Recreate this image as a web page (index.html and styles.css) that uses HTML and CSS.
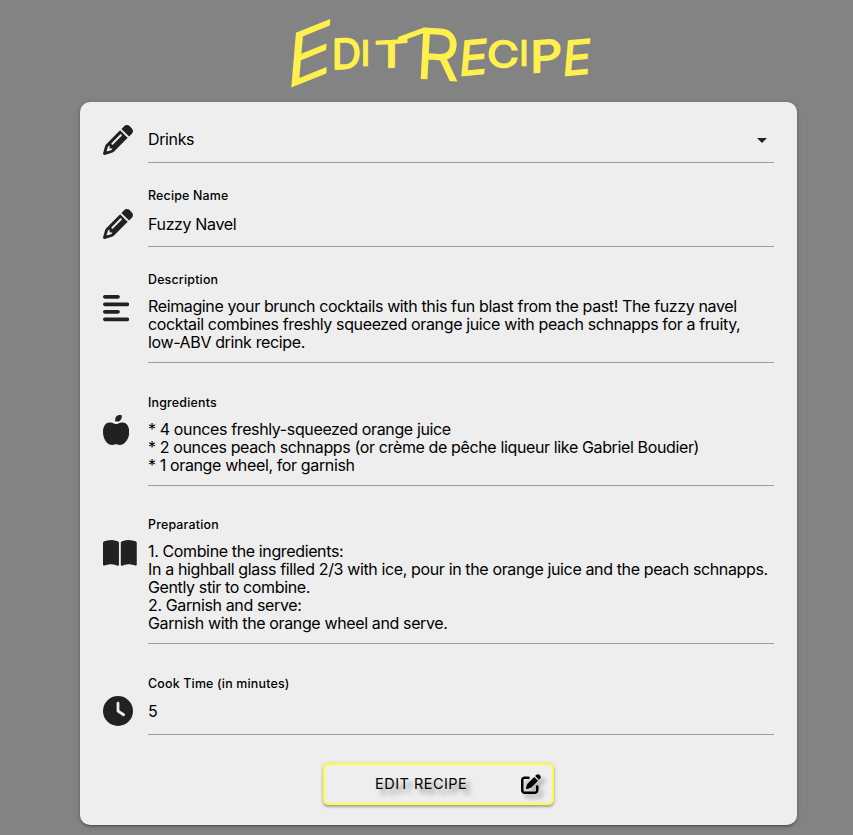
FILE: index.html
```html
<!DOCTYPE html>
<html lang="en">
<head>
<meta charset="utf-8">
<title>Edit Recipe</title>
<link rel="stylesheet" href="styles.css">
</head>
<body>
<svg class="defs" aria-hidden="true">
<symbol id="pencil" viewBox="0 0 512 512"><path d="M410.3 231l11.3-11.3-33.9-33.9-62.1-62.1L291.7 89.8l-11.3 11.3-22.6 22.6L58.6 322.9c-10.4 10.4-18 23.3-22.2 37.4L1 480.7c-2.5 8.4-.2 17.5 6.1 23.7s15.3 8.5 23.7 6.1l120.3-35.4c14.1-4.2 27-11.8 37.4-22.2L387.7 253.7 410.3 231zM160 399.4l-9.1 22.7c-4 3.1-8.5 5.4-13.3 6.9L59.4 452l23-78.1c1.4-4.9 3.8-9.4 6.9-13.3l22.7-9.1v32c0 8.8 7.2 16 16 16h32zM362.7 18.7L348.3 33.2 325.7 55.8 314.3 67.1l33.9 33.9 62.1 62.1 33.9 33.9 11.3-11.3 22.6-22.6 14.5-14.5c25-25 25-65.5 0-90.5L453.3 18.7c-25-25-65.5-25-90.5 0zm-47.4 168l-144 144c-6.2 6.2-16.4 6.2-22.6 0s-6.2-16.4 0-22.6l144-144c6.2-6.2 16.4-6.2 22.6 0s6.2 16.4 0 22.6z"/></symbol>
</svg>
<h1 class="title"><span class="letter e-big">E</span><span class="letter d">d</span><span class="letter i">i</span><span class="letter t">t</span> <span class="letter r">R</span><span class="letter e">e</span><span class="letter c">c</span><span class="letter i2">i</span><span class="letter p">p</span><span class="letter e2">e</span></h1>
<main class="card">
  <div class="field select">
    <svg class="icon"><use href="#pencil"/></svg>
    <div class="control"><div class="value">Drinks</div><svg class="caret" viewBox="0 0 10 5"><path d="M0 0h10L5 5z"/></svg></div>
  </div>
  <div class="field name">
    <svg class="icon"><use href="#pencil"/></svg>
    <div class="control"><div class="label">Recipe Name</div><div class="value">Fuzzy Navel</div></div>
  </div>
  <div class="field desc">
    <svg class="icon narrow" viewBox="0 0 448 512"><path d="M288 64c0 17.7-14.3 32-32 32H32C14.3 96 0 81.7 0 64S14.3 32 32 32H256c17.7 0 32 14.3 32 32zm0 256c0 17.7-14.3 32-32 32H32c-17.7 0-32-14.3-32-32s14.3-32 32-32H256c17.7 0 32 14.3 32 32zM0 192c0-17.7 14.3-32 32-32H416c17.7 0 32 14.3 32 32s-14.3 32-32 32H32c-17.7 0-32-14.3-32-32zM448 448c0 17.7-14.3 32-32 32H32c-17.7 0-32-14.3-32-32s14.3-32 32-32H416c17.7 0 32 14.3 32 32z"/></svg>
    <div class="control"><div class="label">Description</div><div class="value area">Reimagine your brunch cocktails with this fun blast from the past! The fuzzy navel
cocktail combines freshly squeezed orange juice with peach schnapps for a fruity,
low-ABV drink recipe.</div></div>
  </div>
  <div class="field ingr">
    <svg class="icon narrow" viewBox="0 0 448 512"><path d="M224 112c-8.8 0-16-7.2-16-16V80c0-44.2 35.8-80 80-80h16c8.8 0 16 7.2 16 16V32c0 44.2-35.8 80-80 80H224zM0 288c0-76.3 35.7-160 112-160c27.3 0 59.7 10.3 82.7 19.3c18.8 7.3 39.9 7.3 58.7 0c22.9-8.9 55.4-19.3 82.7-19.3c76.3 0 112 83.7 112 160c0 128-80 224-160 224c-16.5 0-38.1-6.6-51.5-11.3c-8.1-2.8-16.9-2.8-25 0c-13.4 4.7-35 11.3-51.5 11.3C80 512 0 416 0 288z"/></svg>
    <div class="control"><div class="label">Ingredients</div><div class="value area">* 4 ounces freshly-squeezed orange juice
* 2 ounces peach schnapps (or crème de pêche liqueur like Gabriel Boudier)
* 1 orange wheel, for garnish</div></div>
  </div>
  <div class="field prep">
    <svg class="icon wide" viewBox="0 0 576 512"><path d="M249.6 471.5c10.8 3.8 22.4-4.1 22.4-15.5V78.6c0-4.2-1.6-8.4-5-11C247.4 52 202.4 32 144 32C93.5 32 46.3 45.3 18.1 56.1C6.8 60.5 0 71.7 0 83.8V454.1c0 11.9 12.8 20.2 24.1 16.5C55.6 460.1 105.5 448 144 448c33.9 0 79 14 105.6 23.5zm76.8 0C353 462 398.1 448 432 448c38.5 0 88.4 12.1 119.9 22.6c11.3 3.8 24.1-4.6 24.1-16.5V83.8c0-12.1-6.8-23.3-18.1-27.6C529.7 45.3 482.5 32 432 32c-58.4 0-103.4 20-123 35.6c-3.3 2.6-5 6.8-5 11V456c0 11.4 11.7 19.3 22.4 15.5z"/></svg>
    <div class="control"><div class="label">Preparation</div><div class="value area">1. Combine the ingredients:
In a highball glass filled 2/3 with ice, pour in the orange juice and the peach schnapps.
Gently stir to combine.
2. Garnish and serve:
Garnish with the orange wheel and serve.</div></div>
  </div>
  <div class="field time">
    <svg class="icon" viewBox="0 0 512 512"><path fill-rule="evenodd" d="M256 0a256 256 0 1 1 0 512A256 256 0 1 1 256 0zM232 120V256c0 8 4 15.5 10.7 20l96 64c11 7.4 25.9 4.4 33.3-6.7s4.4-25.9-6.7-33.3L280 243.2V120c0-13.3-10.7-24-24-24s-24 10.7-24 24z"/></svg>
    <div class="control"><div class="label">Cook Time (in minutes)</div><div class="value">5</div></div>
  </div>
  <button class="submit" type="button"><span class="submit-text">EDIT RECIPE</span><svg class="submit-icon" viewBox="0 0 512 512"><path d="M471.6 21.7c-21.9-21.9-57.3-21.9-79.2 0L362.3 51.7l97.9 97.9 30.1-30.1c21.9-21.9 21.9-57.3 0-79.2L471.6 21.7zm-299.2 220c-6.1 6.1-10.8 13.6-13.5 21.9l-29.6 88.8c-2.9 8.6-.6 18.1 5.8 24.6s15.9 8.7 24.6 5.8l88.8-29.6c8.2-2.7 15.7-7.4 21.9-13.5L437.7 172.3 339.7 74.3 172.4 241.7zM96 64C43 64 0 107 0 160V416c0 53 43 96 96 96H352c53 0 96-43 96-96V320c0-17.7-14.3-32-32-32s-32 14.3-32 32v96c0 17.7-14.3 32-32 32H96c-17.7 0-32-14.3-32-32V160c0-17.7 14.3-32 32-32h96c17.7 0 32-14.3 32-32s-14.3-32-32-32H96z"/></svg></button>
</main>
</body>
</html>
```
FILE: styles.css
```css
* { box-sizing: border-box; }
body { margin: 0; height: 835px; overflow: hidden; background: #838383; font-family: Inter, sans-serif; color: #000; }
.defs { display: none; }

.title { display: flex; align-items: center; height: 102px; margin: 0; padding: 6px 0 0 289px; color: #fff04d; font-weight: 300; line-height: 1; text-transform: uppercase; }
.letter { display: flex; justify-content: center; flex: none; -webkit-text-stroke: 2.6px #fff04d; stroke-linejoin: round; }
.e-big { width: 40px; font-size: 70px; transform: translateX(1px) skewY(-22deg) skewX(-5deg) scaleX(1.08); -webkit-text-stroke-width: 2px; }
.d { width: 31px; font-size: 40px; transform: translateX(2px) skewY(-3deg); }
.i { width: 11px; font-size: 32px; }
.t { width: 37px; font-size: 36px; transform: translateX(2px) scaleX(1.5) skewY(-5deg); -webkit-text-stroke-width: 2px; }
.r { position: relative; width: 54px; font-size: 68px; transform: translateX(3px) skewX(-3deg) skewY(4deg); -webkit-text-stroke-width: 2px; }
.r::before { content: ""; position: absolute; left: -15px; top: 14px; width: 30px; height: 5px; border-radius: 3px; background: #fff04d; transform: rotate(-24deg); }
.e { width: 25px; font-size: 46px; transform: translate(-1px, 3px) skewX(-5deg) skewY(-5deg); }
.c { width: 32px; font-size: 35px; transform: scaleX(1.22); }
.i2 { width: 10px; font-size: 32px; }
.p { width: 34px; font-size: 42px; transform: translateY(2px) scaleX(1.2) skewY(-5deg); }
.e2 { width: 28px; font-size: 46px; transform: translateY(3px) skewX(-5deg) skewY(-5deg); }

.card { display: flex; flex-direction: column; width: 717px; height: 723px; margin-left: 80px; padding: 0 23px; border-radius: 10px; background: #eee; box-shadow: 0 2px 2px rgba(0,0,0,.14), 0 3px 1px -2px rgba(0,0,0,.12), 0 1px 5px rgba(0,0,0,.2); }
.field { display: flex; flex: none; }
.icon { width: 30px; height: 30px; margin-right: 15px; flex: none; fill: #212121; }
.narrow { width: 26.25px; margin-right: 18.75px; }
.wide { width: 33.75px; margin-right: 11.25px; }
.control { flex: 1; display: flex; flex-direction: column; border-bottom: 1px solid #9e9e9e; min-width: 0; }
.select .control { flex-direction: row; justify-content: space-between; }
.label { height: 18px; font-size: 12.4px; font-weight: 450; line-height: 18px; letter-spacing: .2px; white-space: nowrap; }
.value { font-size: 16px; line-height: 18px; letter-spacing: -.37px; white-space: pre; }
.caret { width: 10px; height: 5px; margin: 36px 7px 0 0; fill: #212121; }
.select { height: 61px; }
.select .icon { margin-top: 23px; }
.select .value { margin-top: 28px; }
.name { height: 84px; }
.name .icon { margin-top: 46px; }
.name .control { padding-top: 24px; }
.name .value { margin-top: 10px; }
.desc { height: 116px; }
.desc .icon { margin-top: 46px; }
.desc .control { padding-top: 24px; }
.area { margin-top: 8px; }
.ingr { height: 123px; }
.ingr .icon { margin-top: 52px; }
.ingr .control { padding-top: 31px; }
.prep { height: 158px; }
.prep .icon { margin-top: 52px; }
.prep .control { padding-top: 30px; }
.time { height: 91px; }
.time .icon { margin-top: 52px; }
.time .control { padding-top: 31px; }
.time .value { margin-top: 9px; }

.submit { display: flex; align-items: center; width: 231px; height: 42px; margin: 28px 0 0 220px; padding: 0 11px 1px 50px; border: 2px solid #ffff36; border-radius: 5px; background: #eee; color: #000; box-shadow: 0 2px 2px rgba(0,0,0,.2), 0 1px 4px rgba(0,0,0,.2); font: 14.5px Inter, sans-serif; }
.submit-text { flex: 1; text-align: left; letter-spacing: .48px; text-shadow: 5px 5px 5px rgba(0,0,0,.4); white-space: nowrap; }
.submit-icon { width: 20px; height: 20px; filter: drop-shadow(4px 4px 2px rgba(0,0,0,.3)); }
```
